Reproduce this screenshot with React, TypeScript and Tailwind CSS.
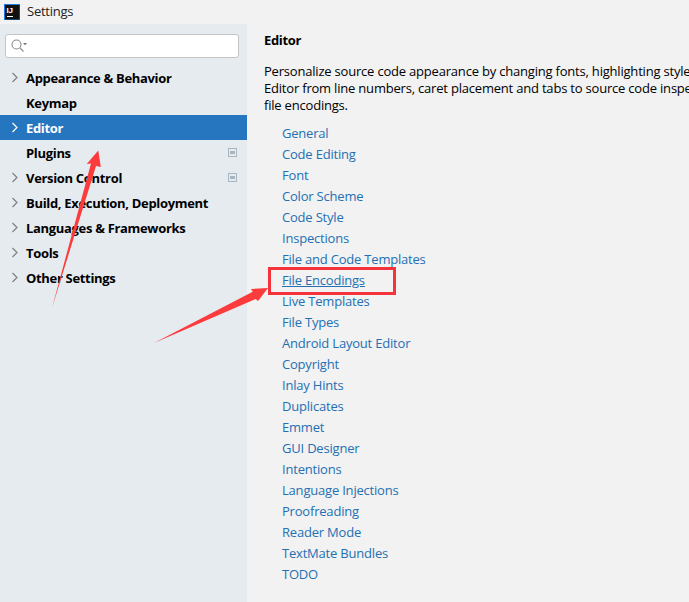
const items = [
  { t: "Appearance & Behavior", c: true },
  { t: "Keymap" },
  { t: "Editor", c: true, s: true },
  { t: "Plugins", b: true },
  { t: "Version Control", c: true, b: true },
  { t: "Build, Execution, Deployment", c: true },
  { t: "Languages & Frameworks", c: true },
  { t: "Tools", c: true },
  { t: "Other Settings", c: true },
];
const links = ["General","Code Editing","Font","Color Scheme","Code Style","Inspections","File and Code Templates","File Encodings","Live Templates","File Types","Android Layout Editor","Copyright","Inlay Hints","Duplicates","Emmet","GUI Designer","Intentions","Language Injections","Proofreading","Reader Mode","TextMate Bundles","TODO"];

export default function App() {
  return (
    <div className="relative w-[689px] h-[602px] overflow-hidden bg-[#f2f2f2] text-[13px] text-black tracking-[-0.2px] font-['Open_Sans',sans-serif]">
      <div className="h-6 flex items-center pl-1 gap-[7px]">
        <svg width="16" height="16" viewBox="0 0 16 16">
          <rect x="0" y="0" width="16" height="16" fill="#1c7ce0" />
          <rect x="1" y="1" width="14.5" height="14.5" fill="#111" />
          <text x="2.5" y="8.5" fontSize="8" fontWeight="700" fill="#fff" fontFamily="Liberation Sans">IJ</text>
          <rect x="3" y="12" width="6" height="1" fill="#fff" />
        </svg>
        <span className="text-[#222] tracking-[-0.25px]">Settings</span>
      </div>
      <div className="flex h-[578px]">
        <div className="w-[247px] bg-[#e6ebf0] pt-[10px]">
          <div className="mx-[5px] w-[234px] h-[24px] bg-white border border-[#c4c4c4] rounded-[3px] flex items-center pl-[5px]">
            <svg width="16" height="14" viewBox="0 0 16 14" fill="none" stroke="#8c8c8c" strokeWidth="1.1">
              <circle cx="5.5" cy="5.5" r="4.5" />
              <path d="M9 9l3.5 3.5" />
              <path d="M12 4h4l-2 2.2z" fill="#777" stroke="none" />
            </svg>
          </div>
          <div className="mt-[7px]">
            {items.map((i) => (
              <div key={i.t} className={`relative h-[25px] flex items-center pl-[26px] pt-[2px] font-bold tracking-[-0.32px] ${i.s ? "bg-[#2675bf] text-white" : ""}`}>
                {i.c && (
                  <svg className="absolute left-[11px] top-[7px]" width="8" height="11" viewBox="0 0 8 11" fill="none" stroke={i.s ? "#fff" : "#7f7f7f"} strokeWidth="1.2">
                    <path d="M1.5 1l4.5 4.5L1.5 10" />
                  </svg>
                )}
                {i.t}
                {i.b && (
                  <svg className="absolute left-[228px] top-[8px]" width="9" height="9" viewBox="0 0 9 9">
                    <rect x="0.5" y="0.5" width="8" height="8" fill="none" stroke="#a9b5bf" />
                    <rect x="2" y="3" width="5" height="3" fill="#a9b5bf" />
                  </svg>
                )}
              </div>
            ))}
          </div>
        </div>
        <div className="flex-1 min-w-0 pl-[17px] pt-[7px] overflow-hidden">
          <div className="font-bold leading-[18px] tracking-[-0.32px]">Editor</div>
          <div className="mt-[14px] leading-[17px] whitespace-nowrap">
            <div>Personalize source code appearance by changing fonts, highlighting styles, and color schemes. Customize the</div>
            <div>Editor from line numbers, caret placement and tabs to source code inspections, code style, and</div>
            <div>file encodings.</div>
          </div>
          <div className="mt-[9px] pl-[18px] flex flex-col">
            {links.map((l) => (
              <div key={l} className="h-[21px] leading-[21px] text-[#2470b3]">
                <span className={l === "File Encodings" ? "underline" : ""}>{l}</span>
              </div>
            ))}
          </div>
        </div>
      </div>
      <div className="absolute left-[268px] top-[267px] w-[128px] h-[28px] border-[3px] border-[#f5333a]" />
      <svg className="absolute inset-0 pointer-events-none" width="689" height="602" viewBox="0 0 689 602">
        <path d="M98.3 150.5L100.8 167L96 166L52 308L91 163.5L86.7 164Z" fill="#fb3b3c" />
        <path d="M268 288L258 301L255.7 299L154 343L252.7 291.7L251 289Z" fill="#fb3b3c" />
      </svg>
    </div>
  );
}
